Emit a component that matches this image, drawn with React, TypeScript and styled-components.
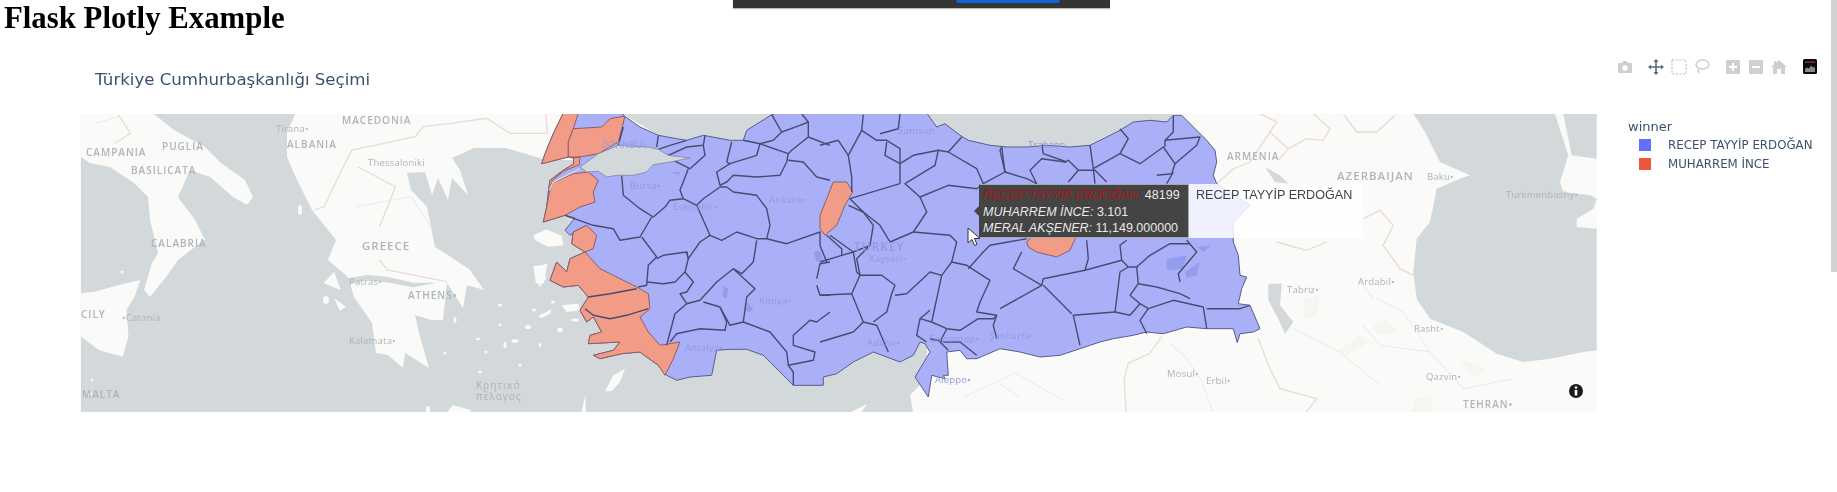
import React from 'react';
import styled, { createGlobalStyle } from 'styled-components';

const Global = createGlobalStyle`
  html, body { margin: 0; padding: 0; background: #fff; overflow: hidden; height: 100%; }
  #root { height: 100%; }
`;

const conv = (ox: number, oy: number, sx: number, sy: number) => (s: string) =>
  s.trim().split(/\s+/).map((p) => {
    const [x, y] = p.split(',').map(Number);
    return `${(ox + x / sx).toFixed(1)},${(oy + y / sy).toFixed(1)}`;
  }).join(' ');
const z9 = conv(530, 112, 3, 3);
const z10 = conv(820, 112, 3, 3);
const z11 = conv(1000, 112, 3, 3);
const z12 = conv(1230, 112, 3, 3);
const z1 = conv(0, 0, 2.529, 3);
const z4 = conv(0, 240, 2.529, 3);
const z5 = conv(620, 240, 2.529, 3);

const OUTLINE = [
  z9('100,3 280,3 280,10 330,45 385,70 440,80 470,85 520,70 600,85 640,85 650,55 725,8 740,3'),
  z10('320,3 350,45 375,35 420,70 445,85 510,100 560,105 620,105 680,100 750,105 810,100 860,75'),
  z11('360,55 400,30 450,25 500,30 520,10 545,10 560,25 590,55 620,85 645,115 650,150 640,190 650,215 750,280 700,330 700,390 715,430 720,490 740,495 725,530 715,575 750,580 780,650 760,660 720,665 712,692 700,650 620,650 560,645 490,665 440,660 400,670 340,680 300,690 240,710 180,730 120,735 60,720 0,710'),
  z10('470,740 440,740 420,715 380,720 385,790 370,790 375,800 335,790 325,855 285,795 330,720 315,695 300,690 280,730 240,750 200,735 160,720 100,750 50,785 10,795'),
  z9('880,820 790,820 760,790 700,730 650,712 600,712 560,715 545,790 480,795 440,805 410,790 385,760 350,735 330,720 275,725 210,740 190,730 250,715 270,690 175,695 180,670 215,660 190,615 170,630 150,595 175,555 145,520 100,525 60,505 80,450 110,480 120,440 165,420 125,395 130,360 170,340 120,370 105,355 135,318 105,310 40,330 50,285 55,240 60,205 100,175 132,155 130,138 115,135 35,155 45,125 70,65'),
].join(' ');

const RED = [
  z9('100,3 145,3 130,50 115,90 115,135 35,155 45,125 70,65'),
  z9('130,50 215,45 240,20 285,12 265,90 205,125 150,135 115,135 115,90'),
  z9('130,138 150,135 148,158 100,178 68,205 55,240 60,205 100,175 132,155'),
  z9('58,240 70,212 130,185 175,180 205,205 190,240 195,270 150,285 105,310 40,330 50,285'),
  z9('170,340 200,370 190,410 165,420 210,470 250,490 320,525 355,545 360,590 330,615 355,660 390,700 450,690 430,740 405,790 385,760 350,735 330,720 275,725 210,740 190,730 250,715 270,690 175,695 180,670 215,660 190,615 170,630 150,595 175,555 145,520 100,525 60,505 80,450 110,480 120,440 165,420 125,395 130,360'),
  z10('40,210 80,210 98,240 75,280 50,340 15,370 0,350 0,310 20,260'),
  z10('620,390 640,370 770,370 750,415 710,435 650,420 625,405'),
];

const LINES = [
  z9('265,100 280,45'), z9('385,70 380,105'), z9('385,112 420,100 470,85'),
  z9('415,130 470,105 520,100 525,70'), z9('520,100 525,130 480,170 430,145'),
  z9('605,90 590,150 600,155 680,130 690,95 640,85'),
  z9('690,95 775,125 770,150 750,190 680,195 610,190 590,210 570,220 560,180 600,155'),
  z9('725,8 755,60 730,85 690,95'), z9('815,5 835,30 835,75 785,115 775,125'),
  z9('755,60 810,40 835,30'), z9('835,75 900,100'), z9('775,145 820,150 860,195 900,205'),
  z9('590,225 610,240 680,250 710,290 720,340 710,380 770,395 870,360 870,400 890,450'),
  z9('275,190 280,250 330,290 370,315 405,285 420,265 460,260 450,235 475,170'),
  z9('460,260 500,280 540,370 575,385 620,360 680,380 710,380'),
  z9('500,280 520,260 570,225 590,225'),
  z9('105,310 190,340 250,350 270,385 330,375 365,315'),
  z9('335,375 380,435 355,460 350,520 325,525'),
  z9('540,370 510,390 475,440 470,420 400,430 380,440'),
  z9('470,420 475,440 465,480 435,510 400,515 350,510'),
  z9('465,480 490,510 470,540 450,545 470,575 435,605 415,680 410,700'),
  z9('680,385 670,450 635,485 610,470 560,510 510,565 470,575'),
  z9('610,470 675,530 650,555 640,630 600,640 570,585 520,570'),
  z9('570,585 590,630 585,655 510,650 440,665 420,690'),
  z9('640,630 720,660 770,720 775,760 850,745 855,720 790,700 790,670 840,625 860,630 900,600'),
  z9('775,760 790,780 790,820'), z9('860,520 870,550 900,550'), z9('860,500 870,455 900,450'),
  z9('175,555 240,545 320,530'), z9('165,590 190,610 240,620 290,610 355,590'),
  z10('130,8 125,55 85,130 95,195 95,240'), z10('0,100 55,85 85,130'),
  z10('125,55 170,85 200,85 240,110 240,215'), z10('240,5 235,50 180,65'),
  z10('200,90 195,130 240,155 280,130 355,115 345,160 255,215 300,255 385,220 470,230 490,215 555,180 540,115 545,105'),
  z10('355,115 385,120 470,170 490,215'), z10('385,120 425,75'),
  z10('240,215 90,260 130,300 180,340 210,390 280,360 320,300 300,255'),
  z10('85,280 130,300 160,340 150,400 100,420 30,370'), z10('20,370 65,410 65,430 0,450'),
  z10('65,430 100,420 110,480 120,490 95,545 130,630 100,660 0,690'), z10('95,545 0,550'),
  z10('150,400 110,440 120,490 185,490 225,520 215,545 200,600 160,630'),
  z10('280,360 390,370 410,390 395,450 365,490 330,480 260,545 225,550'),
  z10('130,630 170,640 205,720'),
  z10('395,450 440,460 510,505 480,570 470,600 530,610 520,640 530,680'),
  z10('365,490 335,630 380,650 420,655 475,620 520,620 530,610'),
  z10('335,630 300,620 290,670 320,690'), z10('330,595 300,620'),
  z10('380,650 360,690 385,715'), z10('330,680 375,690 420,690 470,730'),
  z10('445,470 490,420 510,400 620,380'),
  z10('545,105 555,180 620,200 650,215 630,175 665,140 735,150 745,145 775,175 745,210'),
  z10('665,95 670,125 740,150'), z10('775,175 825,175 860,210'),
  z11('280,170 270,100'), z11('280,170 360,125 385,80 360,50'),
  z11('360,125 420,155 490,105 525,155 515,185 470,190'),
  z11('495,105 495,85 520,60 520,10'), z11('495,85 600,75 590,100 525,155'),
  z11('280,170 285,215'), z11('520,180 500,215'),
  z11('260,385 265,440 255,475 130,500 125,520 40,470 65,420'),
  z11('255,475 365,445 385,465 360,480 345,600 390,610 420,575'),
  z11('365,445 360,400 380,385'),
  z11('385,465 410,465 415,515 390,550 420,575 445,590 520,565 610,585 620,650'),
  z11('620,590 720,590 750,580'), z11('415,515 470,525 540,545 570,560'),
  z11('540,510 535,485 590,420 560,385'), z11('410,465 450,430 510,395 570,395'),
  z11('445,590 420,625 440,665'), z11('345,600 220,610 240,700'),
  z11('130,520 215,605'), z11('125,520 0,590'),
];

const SEA = [
  '154,114 295,114 287,133 287,157 297,180 312,210 336,240 328,260 348,277 354,297 372,323 376,353 388,355 403,368 405,353 429,368 419,333 415,315 431,320 443,320 447,283 463,308 467,285 484,290 470,270 451,257 435,247 427,207 411,190 407,173 425,172 432,195 438,178 448,200 452,178 468,195 460,170 452,158 474,148 506,148 546,160 600,160 640,330 928,340 925,380 910,395 913,412 81,412 81,157 90,163 110,167 134,183 148,197 150,220 158,253 152,263 144,290 150,297 166,277 178,260 200,243 205,240 195,220 178,197 190,170 210,177 233,197 247,205 253,197 245,180 221,163 205,147 174,130',
  '623,114 1173,114 1150,150 1000,170 700,160',
  z12('550,5 585,60 630,150 720,190 690,200 620,230 600,330 560,380 550,480 560,560 600,620 700,660 800,725 880,750 960,740 1060,720 1100,715 1100,350 1040,345 1040,320 1090,290 1100,260 1080,250 1000,240 990,210 1015,130 975,5'),
  z12('1000,5 1025,130 1100,140 1100,5'),
  z12('115,515 155,515 150,580 190,630 165,665 145,620 115,565'),
  z12('105,165 150,190 175,215 135,210'),
  z4('870,118 930,104 985,112 1045,128 1105,128 1045,142 985,128 925,120 880,135'),
];

const ISLANDS = [
  z4('205,160 240,155 300,135 355,120 340,170 320,210 325,290 310,350 250,330 205,290'),
  z9('10,370 50,352 95,372 100,400 55,404 15,385'),
  z9('10,462 38,460 48,500 28,525 15,490'),
  z9('25,612 65,592 60,605 35,618'), z9('95,580 145,575 150,595 110,600'),
  z9('225,838 250,790 285,770 270,810 245,838'),
  z5('580,518 625,492 610,518'), z4('1130,518 1145,495 1190,510 1190,518'), z4('1470,518 1480,465 1482,518'),
  z4('818,130 845,95 862,150'), z4('845,175 875,200 860,212'), z4('1350,85 1385,70 1375,130 1355,130'),
];
const DOTS: [number, number, number, number][] = [
  [428, 410, 2, 4], [445, 353, 1.5, 1.5], [478, 339, 2, 1.5], [486, 352, 1.5, 1.5], [480, 372, 2, 1.2],
  [505, 345, 1.5, 3], [515, 341, 3.5, 2], [528, 327, 3, 2], [540, 345, 1.5, 2], [560, 330, 3, 2],
  [575, 320, 4, 1.5], [500, 325, 1.5, 1.5], [520, 365, 1.5, 1.5], [420, 305, 1.5, 2], [455, 320, 1.5, 3],
  [534, 310, 2, 1.5], [553, 302, 2, 1.5], [500, 305, 2, 1.5], [300, 210, 2, 5], [326, 300, 3, 4],
  [122, 272, 1.5, 1.5], [92, 380, 1.5, 1.5], [90, 394, 2, 1.5],
];
const BORDERS = [
  z1('1380,340 1385,400 1290,400 1230,355 1140,370 1070,380 1050,410 890,450 860,520 820,620 795,630'),
  z1('300,345 330,400 290,430'), z1('905,500 1000,560 960,680'), z4('960,60 980,90 1130,125'),
  z12('250,5 300,50 280,85 230,80 175,110 145,145'), z12('120,60 175,110'), z12('340,5 380,60 440,60 495,10'),
  z12('400,320 450,295 490,340 460,400 510,470 550,490'), z12('140,390 230,415 290,390'),
  z12('85,680 120,770 150,830 260,860 225,905'),
  z5('1370,290 1340,340 1285,370 1275,420 1280,518'),
  z11('650,215 700,170 750,150 830,30 780,5'),
];
const THIN = [
  z12('400,640 450,700 600,720 700,830 850,800'), z12('190,650 330,720 450,820'),
  z12('440,560 520,600 600,720'), z12('385,500 430,560'),
  z5('1390,310 1430,350 1470,420 1500,518'), z5('870,470 1000,400 1120,480'), z5('960,430 1010,470'),
  z1('900,620 1040,590 1100,700'), z1('300,350 240,370'),
];
const PATCHES = [
  z12('320,720 390,670 420,690 350,730'), z12('430,640 470,620 500,660 440,670'),
  z12('560,860 610,850 600,900 540,900'), z12('690,740 770,770 730,800'), z12('220,560 270,550 260,610 220,620'),
];
const LAKES = [
  z11('500,440 560,430 550,470 500,475'), z11('555,480 600,450 590,490 560,498'), z11('590,405 635,400 610,420'),
  z9('850,420 870,415 880,445 860,450'), z9('650,570 670,590 660,600 640,595'), z9('580,520 595,530 590,560 578,555'),
  z9('425,180 450,180 445,190'), z9('200,150 225,150 210,165'),
];

type Kind = 'land' | 'big' | 'city' | 'tr' | 'trbig' | 'greek';
const LABELS: [string, number, number, Kind][] = [
  ['MACEDONIA', 342, 124, 'land'], ['Tirana•', 276, 132, 'city'], ['CAMPANIA', 86, 156, 'land'], ['PUGLIA', 162, 150, 'land'],
  ['BASILICATA', 131, 174, 'land'], ['ALBANIA', 287, 148, 'land'], ['Thessaloniki', 368, 166, 'city'], ['CALABRIA', 151, 247, 'land'],
  ['GREECE', 362, 250, 'big'], ['Patras•', 349, 285, 'city'], ['ATHENS•', 408, 299, 'land'], ['CILY', 81, 318, 'land'],
  ['•Catania', 122, 321, 'city'], ['Kalamata•', 349, 344, 'city'], ['MALTA', 82, 398, 'land'], ['Κρητικό', 476, 389, 'greek'], ['πέλαγος', 476, 400, 'greek'],
  ['ISTANBUL', 602, 148, 'tr'], ['Bursa•', 630, 189, 'tr'], ['Eskişehir•', 673, 210, 'tr'], ['Ankara•', 769, 203, 'tr'], ['Konya•', 759, 304, 'tr'], ['Antalya•', 685, 351, 'tr'],
  ['TURKEY', 854, 251, 'trbig'], ['Kayseri•', 869, 262, 'tr'], ['Samsun', 898, 134, 'tr'], ['Trabzon', 1028, 148, 'tr'], ['Adana•', 867, 346, 'tr'], ['Gaziantep•', 929, 342, 'tr'], ['Şanlıurfa•', 989, 339, 'tr'], ['Aleppo•', 935, 383, 'tr'],
  ['ARMENIA', 1227, 160, 'land'], ['AZERBAIJAN', 1337, 180, 'big'], ['Baku•', 1427, 180, 'city'], ['Turkmenbashy•', 1506, 198, 'city'], ['Tabriz•', 1287, 293, 'city'], ['Ardabil•', 1358, 285, 'city'], ['Rasht•', 1414, 332, 'city'], ['Qazvin•', 1426, 380, 'city'], ['TEHRAN•', 1463, 408, 'land'], ['Mosul•', 1167, 377, 'city'], ['Erbil•', 1206, 384, 'city'],
];

const Page = styled.div`
  position: relative;
  height: 492px;
  overflow: hidden;
  filter: blur(0.5px);
`;
const Heading = styled.h1`
  margin: 0;
  padding: 1px 0 0 4px;
  font: bold 30.8px/35px "Liberation Serif", serif;
  color: #000;
`;
const ShareBar = styled.div`
  position: absolute;
  left: 733px;
  top: 0;
  width: 377px;
  height: 8px;
  background: #343434;
  box-shadow: 0 1px 1px #bbb;
`;
const SharePill = styled.div`
  position: absolute;
  left: 223px;
  top: 0;
  width: 104px;
  height: 3px;
  border-radius: 0 0 4px 4px;
  background: #0f62d8;
`;
const Scrollbar = styled.div`
  position: absolute;
  right: 0;
  top: 0;
  width: 6px;
  height: 272px;
  background: #d2d2d2;
`;
const Chart = styled.section`
  padding: 0 16px 0 80px;
`;
const ChartHead = styled.div`
  display: flex;
  justify-content: space-between;
  align-items: flex-start;
  height: 78px;
`;
const Title = styled.div`
  margin: 34px 0 0 15px;
  font: 16.6px/20px "DejaVu Sans", sans-serif;
  color: #3d5070;
`;
const Modebar = styled.div`
  display: flex;
  gap: 9px;
  margin-top: 21px;
`;
const ModeGroup = styled.div`
  display: flex;
  gap: 1px;
`;
const ModeIcon = styled.svg<{ $active?: boolean }>`
  width: 22px;
  height: 20px;
  fill: ${(p) => (p.$active ? '#5c6b7d' : '#cfcfcf')};
`;
const ChartBody = styled.div`
  display: flex;
  align-items: flex-start;
`;
const MapFrame = styled.div`
  position: relative;
  flex: none;
  width: 1517px;
  height: 298px;
  overflow: hidden;
`;
const MapSvg = styled.svg`
  display: block;
  width: 1517px;
  height: 298px;
`;
const MapLabel = styled.text<{ $kind: Kind }>`
  font-family: "Open Sans", sans-serif;
  font-size: ${(p) => ({ land: 10, big: 11.5, city: 9.5, tr: 9.5, trbig: 12, greek: 10 }[p.$kind])}px;
  font-weight: ${(p) => (p.$kind === 'land' || p.$kind === 'big' || p.$kind === 'trbig' ? 600 : 400)};
  letter-spacing: ${(p) => (p.$kind === 'city' || p.$kind === 'tr' ? 0.2 : 1)}px;
  fill: ${(p) => (p.$kind === 'tr' || p.$kind === 'trbig' ? '#9499de' : '#adb4ba')};
`;
const Hover = styled.div`
  position: absolute;
  left: 899px;
  top: 70px;
  display: flex;
`;
const Tip = styled.div`
  position: relative;
  width: 210px;
  height: 54px;
  box-sizing: border-box;
  padding: 2px 0 0 3px;
  background: #444;
  border: 1px solid #a8a8a8;
  border-left-color: #444;
  font: 12.5px/16.5px "Liberation Sans", Arial, sans-serif;
  color: #e8e8e8;
  white-space: nowrap;
  &::before {
    content: "";
    position: absolute;
    left: -6px;
    top: 21px;
    border: 5px solid transparent;
    border-left: 0;
    border-right-color: #444;
  }
`;
const TipRow = styled.div``;
const TipName = styled.i<{ $red?: boolean }>`
  color: ${(p) => (p.$red ? '#b01212' : '#e8e8e8')};
`;
const TipSecondary = styled.div`
  width: 174px;
  height: 54px;
  box-sizing: border-box;
  padding: 2px 0 0 7px;
  background: rgba(255, 255, 255, 0.82);
  font: 12.6px/18px "Liberation Sans", Arial, sans-serif;
  color: #444;
  white-space: nowrap;
`;
const Cursor = styled.svg`
  position: absolute;
  left: 887px;
  top: 113px;
  width: 14px;
  height: 20px;
`;
const InfoIcon = styled.svg`
  position: absolute;
  right: 14px;
  bottom: 14px;
  width: 14px;
  height: 14px;
`;
const Legend = styled.div`
  margin-left: 31px;
  font-family: "DejaVu Sans", sans-serif;
  color: #3d5070;
`;
const LegendTitle = styled.div`
  font-size: 13px;
  line-height: 16px;
  margin-top: 5px;
  margin-bottom: 1px;
`;
const LegendRow = styled.div`
  display: flex;
  align-items: center;
  height: 18.5px;
  padding-left: 11px;
  font-size: 11.8px;
  white-space: nowrap;
`;
const Swatch = styled.span<{ $color: string }>`
  width: 12px;
  height: 12px;
  margin-right: 17px;
  background: ${(p) => p.$color};
`;

export default function App() {
  return (
    <Page>
      <Global />
      <Heading>Flask Plotly Example</Heading>
      <ShareBar><SharePill /></ShareBar>
      <Scrollbar />
      <Chart>
        <ChartHead>
          <Title>Türkiye Cumhurbaşkanlığı Seçimi</Title>
          <Modebar>
            <ModeGroup>
              <ModeIcon viewBox="0 0 22 20"><path fillRule="evenodd" d="M5 6h3l1.5-2h3L14 6h3a1 1 0 0 1 1 1v8a1 1 0 0 1-1 1H5a1 1 0 0 1-1-1V7a1 1 0 0 1 1-1zm6 2.2a2.8 2.8 0 1 0 0 5.6 2.8 2.8 0 0 0 0-5.6z" /></ModeIcon>
            </ModeGroup>
            <ModeGroup>
              <ModeIcon $active viewBox="0 0 22 20"><path d="M11 2l2.6 3h-1.8v4.2H16V7.4l3 2.6-3 2.6v-1.8h-4.2V15h1.8L11 18l-2.6-3h1.8v-4.2H6v1.8L3 10l3-2.6v1.8h4.2V5H8.400z" /></ModeIcon>
              <ModeIcon viewBox="0 0 22 20"><path fill="none" stroke="#cfcfcf" strokeWidth="1.6" strokeDasharray="2 1.6" d="M4 3h14v14H4z" /></ModeIcon>
              <ModeIcon viewBox="0 0 22 20"><path fill="none" stroke="#cfcfcf" strokeWidth="1.5" d="M18 7.500c0 2.600-3 4.500-6.500 4.500S5 10.100 5 7.500 8 3 11.500 3 18 4.900 18 7.500zM8 11.500c-1.500 1-1 3 .5 4.500" /></ModeIcon>
            </ModeGroup>
            <ModeGroup>
              <ModeIcon viewBox="0 0 22 20"><path fillRule="evenodd" d="M5 3h12a1 1 0 0 1 1 1v12a1 1 0 0 1-1 1H5a1 1 0 0 1-1-1V4a1 1 0 0 1 1-1zm5 3v3H7v2h3v3h2v-3h3V9h-3V6z" /></ModeIcon>
              <ModeIcon viewBox="0 0 22 20"><path fillRule="evenodd" d="M5 3h12a1 1 0 0 1 1 1v12a1 1 0 0 1-1 1H5a1 1 0 0 1-1-1V4a1 1 0 0 1 1-1zm2 6v2h8V9z" /></ModeIcon>
              <ModeIcon viewBox="0 0 22 20"><path d="M11 3l8 7h-2v7h-4v-5H9v5H5v-7H3l3-2.600V4h2v1.700z" /></ModeIcon>
            </ModeGroup>
            <ModeGroup>
              <ModeIcon viewBox="0 0 22 20">
                <rect x="4" y="2" width="14" height="15" rx="1.500" fill="#0b0b0b" />
                <rect x="6" y="4.500" width="10" height="1.200" fill="#a03a55" />
                <path d="M6 15v-3l2-1.500 2 1 2-3 2 2 2-.5v5z" fill="#8a8a8a" />
              </ModeIcon>
            </ModeGroup>
          </Modebar>
        </ChartHead>
        <ChartBody>
          <MapFrame>
            <MapSvg viewBox="80 114 1517 298">
              <rect x="80" y="114" width="1517" height="298" fill="#fafaf8" />
              {PATCHES.map((p, i) => <polygon key={i} points={p} fill="#f5f5f2" />)}
              {THIN.map((p, i) => <polyline key={i} points={p} fill="none" stroke="#e9ebe9" strokeWidth="1" />)}
              {BORDERS.map((p, i) => <polyline key={i} points={p} fill="none" stroke="#ecd8d8" strokeWidth="1.300" />)}
              {SEA.map((p, i) => <polygon key={i} points={p} fill="#d3d8da" />)}
              {ISLANDS.map((p, i) => <polygon key={i} points={p} fill="#fafaf8" />)}
              {DOTS.map(([x, y, rx, ry], i) => <ellipse key={i} cx={x} cy={y} rx={rx} ry={ry} fill="#fafaf8" />)}
              {LABELS.filter((l) => l[3] !== 'tr' && l[3] !== 'trbig').map(([t, x, y, k]) => <MapLabel key={t} x={x} y={y} $kind={k}>{t}</MapLabel>)}
              <polygon points={OUTLINE} fill="#aab0f8" stroke="#585d8a" strokeWidth="1" strokeLinejoin="round" />
              {LAKES.map((p, i) => <polygon key={i} points={p} fill="#959ceb" />)}
              {RED.map((p, i) => <polygon key={i} points={p} fill="#f29c88" stroke="#8b5f68" strokeWidth="1" strokeLinejoin="round" />)}
              {LINES.map((p, i) => <polyline key={i} points={p} fill="none" stroke="#474b72" strokeWidth="1.400" strokeLinejoin="round" />)}
              <polygon points={z9('205,125 265,100 355,105 385,112 415,130 480,138 420,150 370,158 350,180 310,190 260,190 230,195 205,178 170,180 150,165')} fill="#d3d8da" stroke="#7d84a8" strokeWidth="0.800" />
              <polyline points={z9('150,170 70,210 58,235')} fill="none" stroke="#d3d8da" strokeWidth="1.500" />
              {LABELS.filter((l) => l[3] === 'tr' || l[3] === 'trbig').map(([t, x, y, k]) => <MapLabel key={t} x={x} y={y} $kind={k}>{t}</MapLabel>)}
            </MapSvg>
            <Hover>
              <Tip>
                <TipRow><TipName $red>RECEP TAYYİP ERDOĞAN:</TipName> 48199</TipRow>
                <TipRow><TipName>MUHARREM İNCE:</TipName> 3.101</TipRow>
                <TipRow><TipName>MERAL AKŞENER:</TipName> 11,149.000000</TipRow>
              </Tip>
              <TipSecondary>RECEP TAYYİP ERDOĞAN</TipSecondary>
            </Hover>
            <Cursor viewBox="0 0 14 20"><path d="M1 1v15l4-3.500 2.500 6 2.500-1-2.500-6H13z" fill="#fff" stroke="#333" strokeWidth="1" /></Cursor>
            <InfoIcon viewBox="0 0 14 14">
              <circle cx="7" cy="7" r="7" fill="#1a1a1a" />
              <circle cx="7" cy="3.600" r="1.400" fill="#fff" />
              <rect x="5.700" y="6" width="2.600" height="5.500" fill="#fff" />
            </InfoIcon>
          </MapFrame>
          <Legend>
            <LegendTitle>winner</LegendTitle>
            <LegendRow><Swatch $color="#636efa" />RECEP TAYYİP ERDOĞAN</LegendRow>
            <LegendRow><Swatch $color="#ef553b" />MUHARREM İNCE</LegendRow>
          </Legend>
        </ChartBody>
      </Chart>
    </Page>
  );
}
